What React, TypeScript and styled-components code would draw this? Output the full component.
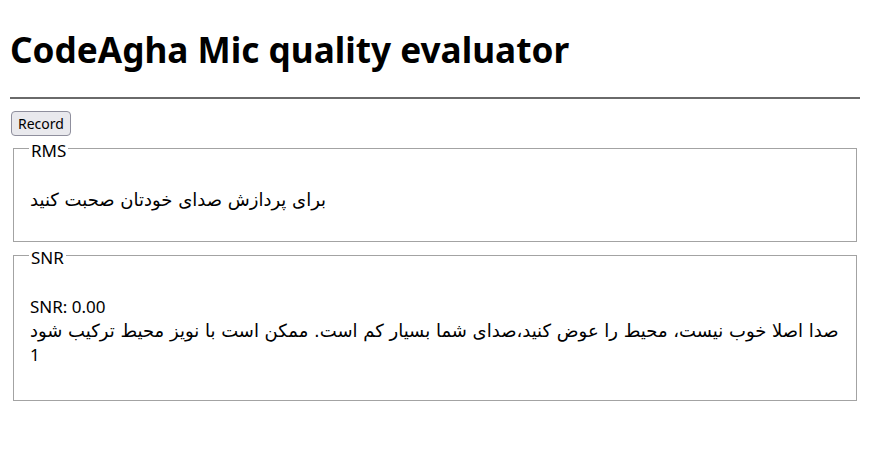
import React from "react";
import styled, { createGlobalStyle } from "styled-components";

const GlobalStyle = createGlobalStyle`
  html, body {
    margin: 0;
    padding: 0;
    background: #ffffff;
  }
  body {
    font-family: "Noto Sans", "DejaVu Sans", sans-serif;
    color: #000000;
  }
`;

const Page = styled.main`
  padding: 0 10px;
  display: flex;
  flex-direction: column;
  align-items: stretch;
`;

const Title = styled.h1`
  margin: 28px 0 0;
  font-family: "Noto Sans", sans-serif;
  font-weight: 700;
  font-size: 35.2px;
  line-height: 42px;
  letter-spacing: 0;
`;

const Rule = styled.hr`
  margin: 27px 0 0;
  height: 2px;
  border: none;
  background: #6a6a6a;
`;

const Toolbar = styled.div`
  display: flex;
  margin-top: 12px;
  padding-left: 1px;
`;

const Button = styled.button`
  font-family: "Noto Sans", sans-serif;
  font-size: 14px;
  line-height: 19px;
  padding: 2px 6px;
  border: 1px solid #8f8f9d;
  border-radius: 4px;
  background: #e9e9ed;
  color: #000;
  cursor: pointer;
`;

const Group = styled.fieldset<{ $top: number; $bottom: number }>`
  margin: ${(p) => p.$top}px 3px 0;
  padding: 0 16px ${(p) => p.$bottom}px;
  border: 1px solid #a3a3a3;
  min-width: 0;
`;

const Legend = styled.legend`
  font-family: "Noto Sans", sans-serif;
  font-size: 17px;
  line-height: 20px;
  padding: 5px 2px 0;
  margin-left: -1px;
`;

const Body = styled.div`
  padding-top: 27px;
  display: flex;
  flex-direction: column;
`;

const Line = styled.div`
  font-family: "Noto Sans", sans-serif;
  font-size: 17px;
  line-height: 24px;
  white-space: nowrap;
`;

const Fa = styled.span`
  font-family: "DejaVu Sans", sans-serif;
  font-size: 18px;
  line-height: 24px;
`;

export default function App() {
  return (
    <>
      <GlobalStyle />
      <Page>
        <Title>CodeAgha Mic quality evaluator</Title>
        <Rule />
        <Toolbar>
          <Button type="button">Record</Button>
        </Toolbar>
        <Group $top={0} $bottom={29}>
          <Legend>RMS</Legend>
          <Body>
            <Line>
              <Fa>برای پردازش صدای خودتان صحبت کنید</Fa>
            </Line>
          </Body>
        </Group>
        <Group $top={1} $bottom={33}>
          <Legend>SNR</Legend>
          <Body>
            <Line>SNR: 0.00</Line>
            <Line>
              <Fa>
                صدا اصلا خوب نیست، محیط را عوض کنید،صدای شما بسیار کم است. ممکن است با نویز محیط ترکیب شود
              </Fa>
            </Line>
            <Line>1</Line>
          </Body>
        </Group>
      </Page>
    </>
  );
}
